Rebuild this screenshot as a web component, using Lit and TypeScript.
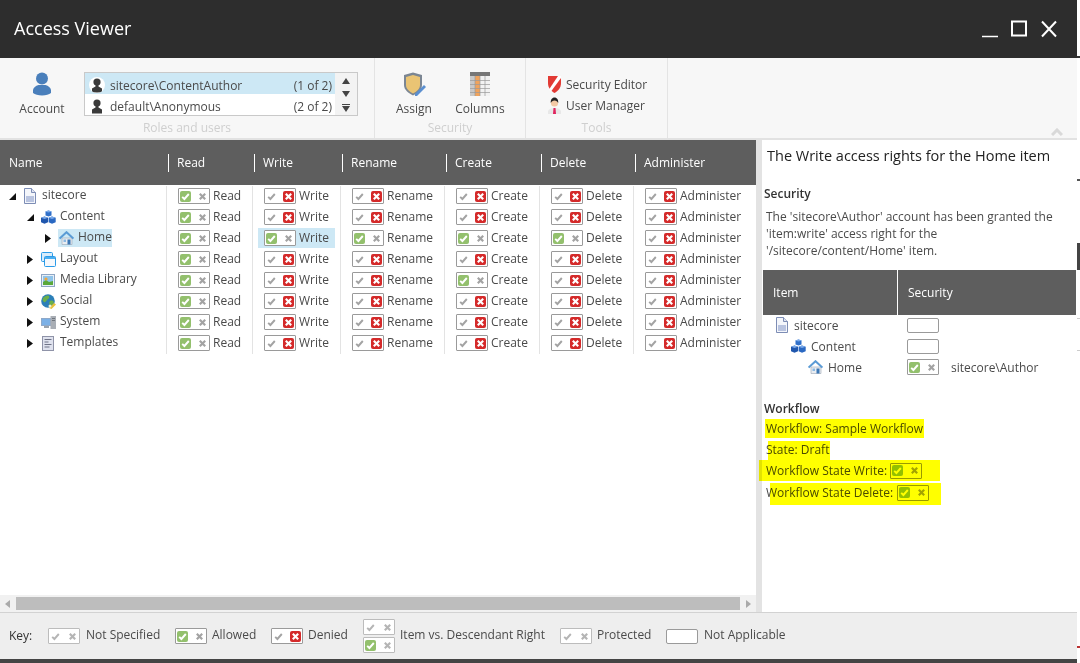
import { LitElement, html, css } from 'lit';
import { customElement } from 'lit/decorators.js';

const COLS = ['Read', 'Write', 'Rename', 'Create', 'Delete', 'Administer'];

const doc = html`<svg viewBox="0 0 14 16" width="14" height="16"><path d="M1.5.5h7l4 4v11h-11z" fill="#f4f6fb" stroke="#7d8db5"/><path d="M8.5.5v4h4" fill="#dfe4f2" stroke="#7d8db5"/><rect x="3" y="8" width="8" height="6" fill="#b9c4e0"/></svg>`;
const cubes = html`<svg viewBox="0 0 15 15" width="15" height="15"><path d="M4.5 0.5l3 1v4l-3 1-3-1v-4z" transform="translate(3 0)" fill="#2f6fc9"/><path d="M3.5 6.5l3.5 1.2v4.6l-3.5 1.5L0 12.3V7.7z" fill="#1f56ad"/><path d="M11 6.5l3.7 1.2v4.6L11 13.8l-3.4-1.5V7.7z" fill="#2a68c2"/><path d="M0 7.7l3.5 1.2L7 7.7 3.5 6.5zM7.6 7.7l3.4 1.2 3.7-1.2L11 6.5zM4 1.5l3.5 1.1L11 1.5 7.5.5z" fill="#79a9ea"/></svg>`;
const home = html`<svg viewBox="0 0 15 14" width="15" height="14"><path d="M3 7h10v6.5H3z" fill="#e9edf2" stroke="#9aa6b3" stroke-width=".6"/><path d="M.6 7.6L7.5 1.2l6.9 6.4" fill="none" stroke="#5b9bd5" stroke-width="2"/><rect x="8.5" y="8.5" width="3" height="5" fill="#3c78b5"/><rect x="4.5" y="8.5" width="2.5" height="2.5" fill="#8cb9e2"/></svg>`;
const layout = html`<svg viewBox="0 0 15 15" width="15" height="15"><rect x=".5" y=".5" width="11" height="9" rx="1" fill="#d8ecfb" stroke="#2a9be8"/><rect x="3.5" y="4.5" width="11" height="10" rx="1" fill="#f5f8fc" stroke="#2a9be8"/><rect x="4" y="5" width="10" height="2" fill="#4aaef0"/></svg>`;
const media = html`<svg viewBox="0 0 14 13" width="14" height="13"><rect x=".5" y=".5" width="13" height="12" fill="#e7eef7" stroke="#8ea6c4"/><rect x="2" y="2" width="10" height="9" fill="#8fc4ea"/><path d="M2 11V8l3-2 3 2 4-1v4z" fill="#5aa83a"/><circle cx="5" cy="5" r="1.6" fill="#f0a63c"/></svg>`;
const globe = html`<svg viewBox="0 0 15 15" width="15" height="15"><circle cx="7" cy="7" r="6.8" fill="#2c7fb8"/><path d="M2 4c2-2 4-3 6-2 1 2-1 3-2 4s-2 3-3 2-2-2-1-4zM9 7c2-1 3 0 4 1-1 3-3 4-4 3s-1-3 0-4z" fill="#6cb04a"/><path d="M8 14l5-5 2 1.500-4.500 4.500z" fill="#e8c23c"/><circle cx="9" cy="12" r="1.500" fill="#f5f0d0"/></svg>`;
const system = html`<svg viewBox="0 0 15 13" width="15" height="13"><rect x="0" y="2" width="10" height="8" fill="#8fa9c9"/><rect x="1" y="3" width="8" height="6" fill="#7bb0e6"/><rect x="3" y="10" width="5" height="2" fill="#9aa3ad"/><rect x="9.500" y="0" width="5.500" height="13" fill="#a9aeb5"/><rect x="11" y="2" width="3" height="1" fill="#70767e"/><rect x="11" y="4" width="3" height="1" fill="#70767e"/></svg>`;
const templates = html`<svg viewBox="0 0 12 15" width="12" height="15"><rect x=".5" y=".5" width="11" height="14" fill="#dfe2ee" stroke="#8f93a8"/><path d="M2.500 3.500h7M2.500 6h4M2.500 8.500h7M2.500 11h5" stroke="#6f7387"/></svg>`;
const person = html`<svg viewBox="0 0 12 15" width="12" height="15"><circle cx="6" cy="4" r="3.600" fill="#3a3a3a"/><path d="M4.500 7h3v1.500l3.500 2V14.500H1v-4l3.500-2z" fill="#3a3a3a"/></svg>`;

const TREE = [
  { name: 'sitecore', level: 0, open: true, icon: doc },
  { name: 'Content', level: 1, open: true, icon: cubes },
  { name: 'Home', level: 2, icon: home, sel: true },
  { name: 'Layout', level: 1, icon: layout },
  { name: 'Media Library', level: 1, icon: media },
  { name: 'Social', level: 1, icon: globe },
  { name: 'System', level: 1, icon: system },
  { name: 'Templates', level: 1, icon: templates },
];

// which rights are allowed per row, everything else shows as denied
const ALLOWED: Record<number, string[]> = {
  2: ['Write', 'Rename', 'Create', 'Delete'],
  4: ['Create'],
};

type Mark = 'none' | 'allow' | 'deny';

const box = (mark: Mark, light = false) => html`
  <span class="box ${light ? 'light' : ''}">
    <span class="slot ${mark === 'allow' ? 'green' : ''}">
      <svg viewBox="0 0 9 9" width="9" height="9"><path d="M1.200 4.800l2.200 2.200 4.400-5" fill="none" stroke="currentColor" stroke-width="1.900"/></svg>
    </span>
    <span class="slot ${mark === 'deny' ? 'red' : ''}">
      <svg viewBox="0 0 9 9" width="9" height="9"><path d="M1.800 1.800l5.400 5.400M7.200 1.800l-5.400 5.400" fill="none" stroke="currentColor" stroke-width="2.200"/></svg>
    </span>
  </span>
`;

@customElement('app-root')
export class AppRoot extends LitElement {
  static styles = css`
    :host {
      display: flex;
      width: 1080px;
      height: 663px;
      font-family: 'Open Sans', 'Noto Sans', sans-serif;
      font-size: 12px;
      color: #4a4a4a;
      background: #fff;
      overflow: hidden;
    }
    .window {
      width: 1077px;
      display: flex;
      flex-direction: column;
    }
    .edge {
      width: 3px;
      background: linear-gradient(
        #fff 0 56px, #333 56px 58px, #fff 58px 179px, #555 179px 181px, #fff 181px 243px,
        #444 243px 270px, #fff 270px 318px, #ccc 318px 319px, #fff 319px 350px,
        #ccc 350px 351px, #fff 351px 646px, #b33 646px 648px, #fff 648px
      );
    }
    .title {
      height: 58px;
      flex: none;
      box-sizing: border-box;
      background: #2d2d2d;
      color: #fff;
      display: flex;
      align-items: center;
      padding: 0 19px 2px 14px;
      font-size: 18px;
    }
    .title .name { flex: 1; }
    .controls { display: flex; align-items: center; gap: 13px; padding-top: 2px; }
    .controls svg { display: block; }

    .ribbon {
      height: 80px;
      flex: none;
      display: flex;
      background: #f7f7f7;
      border-bottom: 2px solid #e2e2e2;
    }
    .group {
      display: flex;
      flex-direction: column;
      border-right: 1px solid #e4e4e4;
    }
    .g1 { width: 374px; }
    .g2 { width: 150px; }
    .g3 { width: 141px; }
    .group-body { flex: 1; display: flex; min-height: 0; }
    .group-label {
      height: 22px;
      box-sizing: border-box;
      padding-top: 3px;
      line-height: 18px;
      text-align: center;
      color: #cfcfcf;
    }
    .big {
      display: flex;
      flex-direction: column;
      align-items: center;
      padding-top: 14px;
      gap: 4px;
    }
    .big .ico { height: 24px; display: flex; align-items: flex-end; }
    .big svg { display: block; }
    .account { width: 84px; }
    .assign { width: 76px; margin-left: 1px; }
    .columns { width: 56px; }
    .roles {
      width: 274px;
      height: 44px;
      box-sizing: border-box;
      margin-top: 14px;
      border: 1px solid #c9c9c9;
      background: #fff;
      display: flex;
    }
    .role-list { flex: 1; }
    .role {
      height: 21px;
      display: flex;
      align-items: center;
      padding: 0 3px 0 4px;
      gap: 5px;
    }
    .role span.who, .role span.num { position: relative; top: 2px; }
    .role.on { background: #cde8f5; }
    .role .who { flex: 1; }
    .avatar {
      width: 16px;
      height: 16px;
      display: flex;
      justify-content: center;
      align-items: flex-end;
      overflow: hidden;
      margin-top: 3px;
    }
    .role.on .avatar { background: #fff; border-radius: 50%; }
    .spin {
      width: 22px;
      background: #f3f3f3;
      display: flex;
      flex-direction: column;
      align-items: center;
      justify-content: space-between;
      padding: 5px 0 3px;
      box-sizing: border-box;
    }
    .spin svg { display: block; }
    .tools { display: flex; flex-direction: column; padding: 18px 0 0 22px; gap: 5px; }
    .tool { display: flex; align-items: center; gap: 5px; height: 16px; }
    .tool svg { display: block; width: 13px; }
    .collapse { flex: 1; display: flex; justify-content: flex-end; align-items: flex-end; padding: 0 14px 2px 0; }

    .main { flex: 1; display: flex; min-height: 0; }
    .left { width: 756px; display: flex; flex-direction: column; }
    .head {
      height: 45px;
      flex: none;
      background: #5e5e5e;
      color: #fff;
      display: grid;
      grid-template-columns: 168px 86px 88px 104px 95px 94px 121px;
      align-items: center;
    }
    .head div {
      height: 18px;
      line-height: 18px;
      border-left: 1px solid #fff;
      padding-left: 8px;
      font-weight: 500;
    }
    .head div:first-child { border-left: 0; padding-left: 9px; }
    .grid {
      flex: 1;
      padding-top: 1px;
      display: grid;
      grid-template-columns: 166px 86px 88px 104px 95px 94px 123px;
      grid-auto-rows: 21px;
      align-content: start;
    }
    .tree { display: flex; align-items: center; height: 20px; }
    .tree .arrow { width: 8px; margin-right: 6px; display: flex; justify-content: center; }
    .tree .ico { width: 16px; display: flex; justify-content: center; }
    .tree svg { display: block; }
    .tree .label { padding: 0 0 4px 4px; }
    .tree .item { display: flex; align-items: center; height: 18px; }
    .tree .item.sel { background: #cde8f5; }
    .cell {
      border-left: 1px solid #e3e3e3;
      padding-left: 5px;
      display: flex;
      align-items: flex-start;
    }
    .perm {
      display: flex;
      align-items: center;
      height: 20px;
      padding: 0 6px;
      gap: 3px;
    }
    .perm.sel { background: #cde8f5; }
    .perm span.text { position: relative; top: -1px; }

    .box {
      width: 32px;
      height: 16px;
      flex: none;
      box-sizing: border-box;
      border: 1px solid #9a9a9a;
      border-radius: 1px;
      background: #fff;
      display: inline-flex;
      align-items: center;
      justify-content: space-between;
      padding: 0 1px;
      color: #a3a3a3;
    }
    .box.light { border-color: #bcbcbc; color: #b5b5b5; }
    .slot {
      width: 11px;
      height: 11px;
      display: flex;
      align-items: center;
      justify-content: center;
      border-radius: 2px;
    }
    .slot svg { display: block; }
    .slot.green { background: #93c06d; color: #fff; }
    .slot.red { background: #d42a2a; color: #fff; }
    .blank {
      width: 32px;
      height: 15px;
      flex: none;
      box-sizing: border-box;
      border: 1px solid #9a9a9a;
      border-radius: 2px;
      background: #fff;
    }

    .scroll {
      height: 17px;
      flex: none;
      box-sizing: border-box;
      padding: 2px 0;
      background: #f1f1f1;
      display: flex;
      align-items: center;
    }
    .scroll .btn { width: 16px; display: flex; justify-content: center; }
    .scroll .btn svg { display: block; }
    .thumb { width: 726px; height: 13px; background: #bdbdbd; }

    .gutter { width: 6px; background: #e3e3e3; }
    .panel { flex: 1; min-width: 0; padding: 0 1px 0 2px; background: #fff; }
    .panel h1 {
      margin: 0 0 0 3px;
      padding-top: 6px;
      height: 39px;
      font-size: 14.5px;
      line-height: 19px;
      font-weight: 500;
      color: #222;
      white-space: nowrap;
    }
    .panel h2 {
      margin: 0;
      font-size: 12px;
      line-height: 18px;
      font-weight: 600;
      color: #333;
    }
    .panel p { margin: 5px 0 11px 2px; line-height: 17px; }
    .sec-head {
      height: 45px;
      margin-left: -1px;
      background: #5e5e5e;
      color: #fff;
      display: grid;
      grid-template-columns: 134px 1fr;
      align-items: center;
    }
    .sec-head div { padding-left: 10px; height: 100%; line-height: 45px; font-weight: 500; }
    .sec-head div + div { border-left: 1px solid #fff; }
    .sec-rows {
      display: grid;
      grid-template-columns: 132px 1fr;
      grid-auto-rows: 21px;
      padding-left: 11px;
      height: 85px;
      box-sizing: border-box;
    }
    .sec-item { display: flex; align-items: center; gap: 5px; height: 16px; margin-top: 2px; }
    .sec-item svg { display: block; }
    .sec-cell { display: flex; align-items: center; gap: 12px; height: 16px; margin-top: 2px; }
    .sec-cell .blank { margin-top: 1px; }

    .flow { display: flex; flex-direction: column; align-items: flex-start; margin: 0 0 0 2px; }
    .hl {
      position: relative;
      display: flex;
      align-items: center;
      gap: 3px;
      height: 21px;
    }
    .hl::after {
      content: '';
      position: absolute;
      background: #ffff00;
      mix-blend-mode: multiply;
      pointer-events: none;
    }
    .h1::after { left: -1px; right: -1px; top: 1px; bottom: 1px; }
    .h2::after { left: 2px; right: -1px; top: 2px; bottom: 0; }
    .h3::after { left: -7px; right: -18px; top: 0; bottom: 0; }
    .h4::after { left: 4px; right: -12px; top: 1px; bottom: -2px; }
    .h4 { margin-top: 1px; gap: 4px; }

    .key {
      height: 47px;
      flex: none;
      box-sizing: border-box;
      border-top: 1px solid #d2d2d2;
      background: #eee;
      display: grid;
      grid-template-columns: 48px 127px 96px 92px 197px 106px 1fr;
      align-items: center;
      width: 100%;
    }
    .key > div { display: flex; align-items: center; gap: 6px; white-space: nowrap; }
    .key .k { padding: 0 0 2px 9px; color: #333; font-weight: 500; }
    .key .stack { display: flex; flex-direction: column; gap: 2px; }
    .key .item-label { position: relative; top: -2px; }
    .key .tight { gap: 5px; }
    .foot { height: 4px; flex: none; background: #444; }
  `;

  render() {
    return html`
      <div class="window">
        ${this.renderTitle()}
        ${this.renderRibbon()}
        <div class="main">
          <div class="left">
            <div class="head">
              <div>Name</div>
              ${COLS.map((c) => html`<div>${c}</div>`)}
            </div>
            <div class="grid">${TREE.map((row, i) => this.renderRow(row, i))}</div>
            <div class="scroll">
              <div class="btn"><svg width="5" height="8"><path d="M5 0v8L0 4z" fill="#aaa"/></svg></div>
              <div class="thumb"></div>
              <div class="btn"><svg width="5" height="8"><path d="M0 0v8l5-4z" fill="#aaa"/></svg></div>
            </div>
          </div>
          <div class="gutter"></div>
          ${this.renderPanel()}
        </div>
        ${this.renderKey()}
        <div class="foot"></div>
      </div>
      <div class="edge"></div>
    `;
  }

  renderTitle() {
    return html`
      <div class="title">
        <div class="name">Access Viewer</div>
        <div class="controls">
          <svg width="16" height="18"><path d="M0 16.500h16" stroke="#fff" stroke-width="1.500"/></svg>
          <svg width="16" height="18"><rect x="1" y="1.500" width="14" height="14" fill="none" stroke="#fff" stroke-width="2"/></svg>
          <svg width="18" height="18"><path d="M2 1.500l14 15M16 1.500l-14 15" stroke="#fff" stroke-width="2"/></svg>
        </div>
      </div>
    `;
  }

  renderRibbon() {
    return html`
      <div class="ribbon">
        <div class="group g1">
          <div class="group-body">
            <div class="big account">
              <div class="ico">
                <svg viewBox="0 0 18 24" width="18" height="24"><circle cx="9" cy="6.500" r="6" fill="#4a7fbb"/><path d="M5.500 13h7c3 1 5 2.500 5.500 5v3c-2 1.500-5 2.500-9 2.500s-7-1-9-2.500v-3c.5-2.500 2.500-4 5.500-5z" fill="#4a7fbb"/></svg>
              </div>
              <div>Account</div>
            </div>
            <div class="roles">
              <div class="role-list">
                <div class="role on"><span class="avatar">${person}</span><span class="who">sitecore\\ContentAuthor</span><span class="num">(1 of 2)</span></div>
                <div class="role"><span class="avatar">${person}</span><span class="who">default\\Anonymous</span><span class="num">(2 of 2)</span></div>
              </div>
              <div class="spin">
                <svg width="8" height="6"><path d="M4 0l4 6H0z" fill="#444"/></svg>
                <svg width="8" height="6"><path d="M0 0h8L4 6z" fill="#444"/></svg>
                <svg width="8" height="8"><path d="M0 0h8v1H0zM0 2h8L4 8z" fill="#444"/></svg>
              </div>
            </div>
          </div>
          <div class="group-label">Roles and users</div>
        </div>
        <div class="group g2">
          <div class="group-body">
            <div class="big assign">
              <div class="ico">
                <svg viewBox="0 0 24 24" width="24" height="24"><path d="M2 3l9-2.500L20 3v10c0 5-4.500 8-9 10.500C6.500 21 2 18 2 13z" fill="#7b8693"/><path d="M4 5l7-2 7 2v8c0 4-3.500 6.500-7 8.500-3.500-2-7-4.500-7-8.500z" fill="#eac474"/><path d="M13 22l9-9 2 2-9 9h-2z" fill="#5b8fd0"/></svg>
              </div>
              <div>Assign</div>
            </div>
            <div class="big columns">
              <div class="ico">
                <svg viewBox="0 0 20 24" width="20" height="24"><rect x="0" y="0" width="20" height="24" fill="#f2f2f2"/><rect x="0" y="0" width="20" height="4" fill="#777"/><rect x="0" y="4" width="5" height="20" fill="#c9c9c9"/><rect x="5" y="4" width="5" height="20" fill="#f0a35c"/><path d="M0 8.500h20M0 12.500h20M0 16.500h20M0 20.500h20M5 4v20M10 4v20M15 4v20" stroke="#9a9a9a" stroke-width=".7"/></svg>
              </div>
              <div>Columns</div>
            </div>
          </div>
          <div class="group-label">Security</div>
        </div>
        <div class="group g3">
          <div class="group-body">
            <div class="tools">
              <div class="tool">
                <svg viewBox="0 0 13 17" height="17"><path d="M0 0h13v7c0 5-3 8-6.500 10C3 15 0 12 0 7z" fill="#e23a34"/><path d="M10 0h3v2L3 15.500 1 13.500z" fill="#fff"/></svg>
                <span>Security Editor</span>
              </div>
              <div class="tool">
                <svg viewBox="0 0 13 17" height="17"><path d="M0 17v-3c1-2 3-3 6.500-3s5.500 1 6.500 3v3z" fill="#e8e8e8"/><path d="M5.500 11h2l.5 6H5z" fill="#e0245e"/><circle cx="6.500" cy="6" r="3.600" fill="#f3c9a5"/><path d="M2.800 6c-.5-4 2-5.500 3.700-5.500S10.700 2 10.200 6c-.7-1.500-2-2.500-3.700-2.500S3.500 4.500 2.800 6z" fill="#222"/></svg>
                <span>User Manager</span>
              </div>
            </div>
          </div>
          <div class="group-label">Tools</div>
        </div>
        <div class="collapse">
          <svg width="12" height="8"><path d="M1 7l5-5 5 5" fill="none" stroke="#d9d9d9" stroke-width="3"/></svg>
        </div>
      </div>
    `;
  }

  renderRow(row: (typeof TREE)[number], i: number) {
    const allowed = ALLOWED[i] ?? [];
    return html`
      <div class="tree" style="padding-left:${8 + row.level * 18}px">
        <span class="arrow">
          ${row.open
            ? html`<svg width="7" height="7"><path d="M7 0v7H0z" fill="#111"/></svg>`
            : html`<svg width="6" height="9"><path d="M0 0l6 4.500L0 9z" fill="#111"/></svg>`}
        </span>
        <span class="item ${row.sel ? 'sel' : ''}">
          <span class="ico">${row.icon}</span>
          <span class="label">${row.name}</span>
        </span>
      </div>
      ${COLS.map((c) => {
        let mark: Mark = 'deny';
        if (c === 'Read' || allowed.includes(c)) mark = 'allow';
        return html`
          <div class="cell">
            <div class="perm ${row.sel && c === 'Write' ? 'sel' : ''}">
              ${box(mark)}<span class="text">${c}</span>
            </div>
          </div>
        `;
      })}
    `;
  }

  renderPanel() {
    return html`
      <div class="panel">
        <h1>The Write access rights for the Home item</h1>
        <h2>Security</h2>
        <p>The 'sitecore\\Author' account has been granted the<br />'item:write' access right for the<br />'/sitecore/content/Home' item.</p>
        <div class="sec-head"><div>Item</div><div>Security</div></div>
        <div class="sec-rows">
          <div class="sec-item">${doc}<span>sitecore</span></div>
          <div class="sec-cell"><span class="blank"></span></div>
          <div class="sec-item" style="padding-left:16px">${cubes}<span>Content</span></div>
          <div class="sec-cell"><span class="blank"></span></div>
          <div class="sec-item" style="padding-left:33px">${home}<span>Home</span></div>
          <div class="sec-cell">${box('allow')}<span>sitecore\\Author</span></div>
        </div>
        <h2>Workflow</h2>
        <div class="flow">
          <div class="hl h1">Workflow: Sample Workflow</div>
          <div class="hl h2">State: Draft</div>
          <div class="hl h3">Workflow State Write: ${box('allow')}</div>
          <div class="hl h4">Workflow State Delete: ${box('allow')}</div>
        </div>
      </div>
    `;
  }

  renderKey() {
    return html`
      <div class="key">
        <div class="k">Key:</div>
        <div>${box('none', true)}<span class="item-label">Not Specified</span></div>
        <div class="tight">${box('allow')}<span class="item-label">Allowed</span></div>
        <div class="tight">${box('deny')}<span class="item-label">Denied</span></div>
        <div class="tight">
          <div class="stack">${box('none', true)}${box('allow', true)}</div>
          <span class="item-label">Item vs. Descendant Right</span>
        </div>
        <div class="tight">${box('none', true)}<span class="item-label">Protected</span></div>
        <div><span class="blank"></span><span class="item-label">Not Applicable</span></div>
      </div>
    `;
  }
}
